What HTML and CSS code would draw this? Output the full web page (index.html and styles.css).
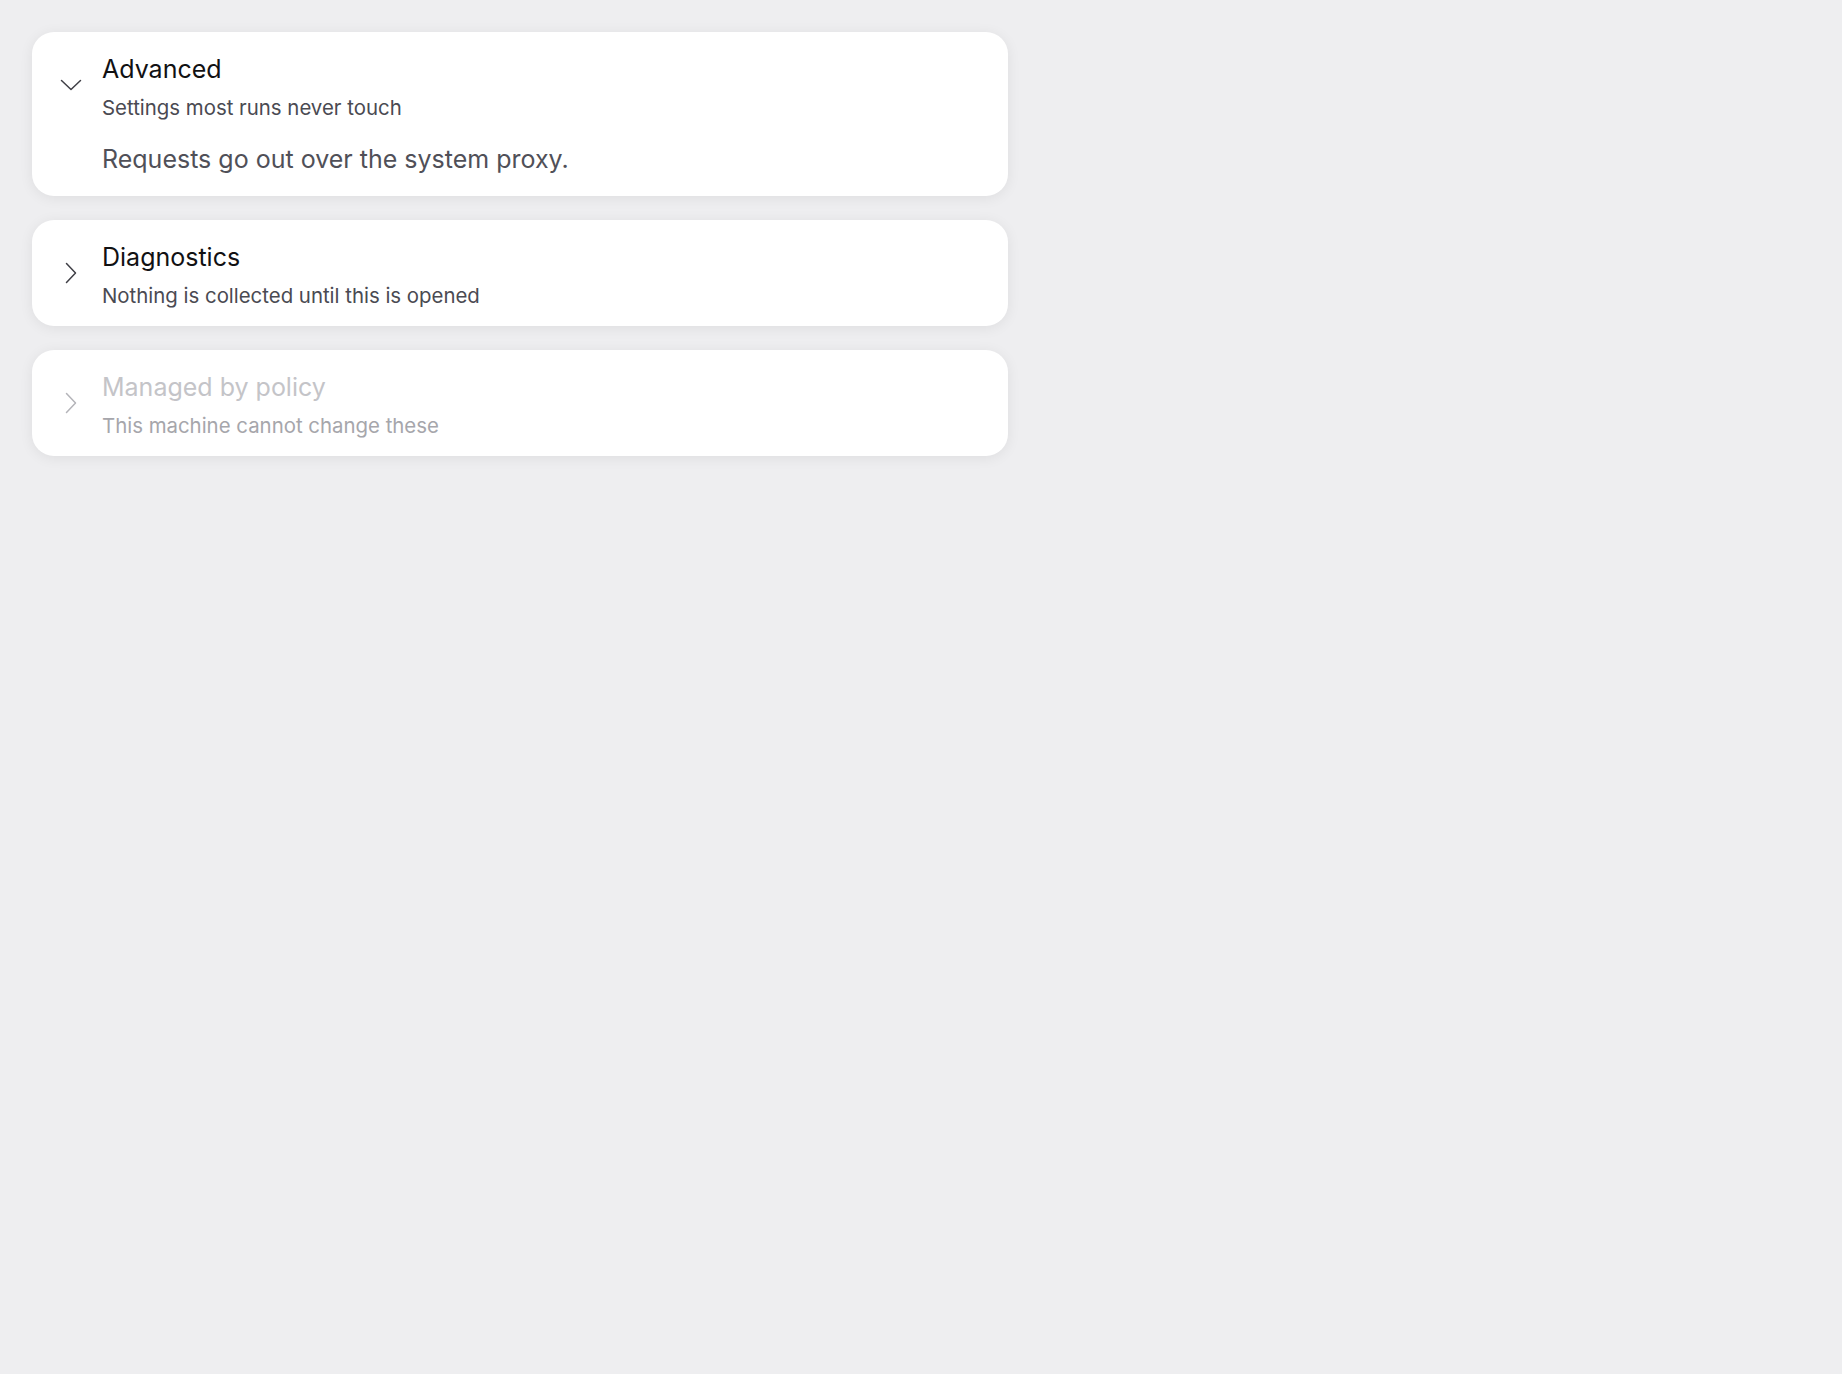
FILE: index.html
```html
<!DOCTYPE html>
<html lang="en">

<head>
    <meta charset="UTF-8">
    <meta name="viewport" content="width=device-width, initial-scale=1.0">
    <title>Settings</title>
    <link rel="stylesheet" href="styles.css">
</head>

<body>
    <div class="sections">
        <div class="section open">
            <div class="section-head">
                <svg class="chevron" viewBox="0 0 24 24" width="24" height="24">
                    <path d="M2.5 7.5 L12 16.5 L21.5 7.5" />
                </svg>
                <div class="head-text">
                    <h2>Advanced</h2>
                    <p>Settings most runs never touch</p>
                </div>
            </div>
            <div class="section-body">
                Requests go out over the system proxy.
            </div>
        </div>

        <div class="section">
            <div class="section-head">
                <svg class="chevron" viewBox="0 0 24 24" width="24" height="24">
                    <path d="M7.5 2.5 L16.5 12 L7.5 21.5" />
                </svg>
                <div class="head-text">
                    <h2>Diagnostics</h2>
                    <p>Nothing is collected until this is opened</p>
                </div>
            </div>
        </div>

        <div class="section disabled">
            <div class="section-head">
                <svg class="chevron" viewBox="0 0 24 24" width="24" height="24">
                    <path d="M7.5 2.5 L16.5 12 L7.5 21.5" />
                </svg>
                <div class="head-text">
                    <h2>Managed by policy</h2>
                    <p>This machine cannot change these</p>
                </div>
            </div>
        </div>
    </div>
</body>

</html>
```

FILE: styles.css
```css
body {
    margin: 0;
    padding: 32px;
    background: #eeeef0;
    font-family: Inter, "Noto Sans", sans-serif;
}

.sections {
    width: 976px;
    display: flex;
    flex-direction: column;
    gap: 24px;
}

.section {
    background: #fff;
    border-radius: 22px;
    box-shadow: 0 2px 14px rgba(0, 0, 0, 0.07);
}

.section-head {
    display: flex;
    align-items: center;
    gap: 19px;
    padding: 19px 20px 17px 27px;
}

.chevron {
    flex: none;
    fill: none;
    stroke: #3f3f46;
    stroke-width: 1.5;
    stroke-linecap: round;
    stroke-linejoin: round;
    margin-top: -3px;
}

.head-text h2 {
    margin: 0;
    font-size: 25px;
    line-height: 36px;
    font-weight: 400;
    color: #111113;
}

.head-text p {
    margin: 7px 0 0;
    font-size: 20.4px;
    line-height: 27px;
    color: #4a4a52;
}

.section-body {
    padding: 6px 20px 22px 70px;
    font-size: 25px;
    line-height: 30px;
    color: #505058;
}

.disabled .chevron {
    stroke: #b4b4b9;
}

.disabled .head-text h2 {
    color: #c4c4c8;
}

.disabled .head-text p {
    color: #a6a6ab;
}
```
